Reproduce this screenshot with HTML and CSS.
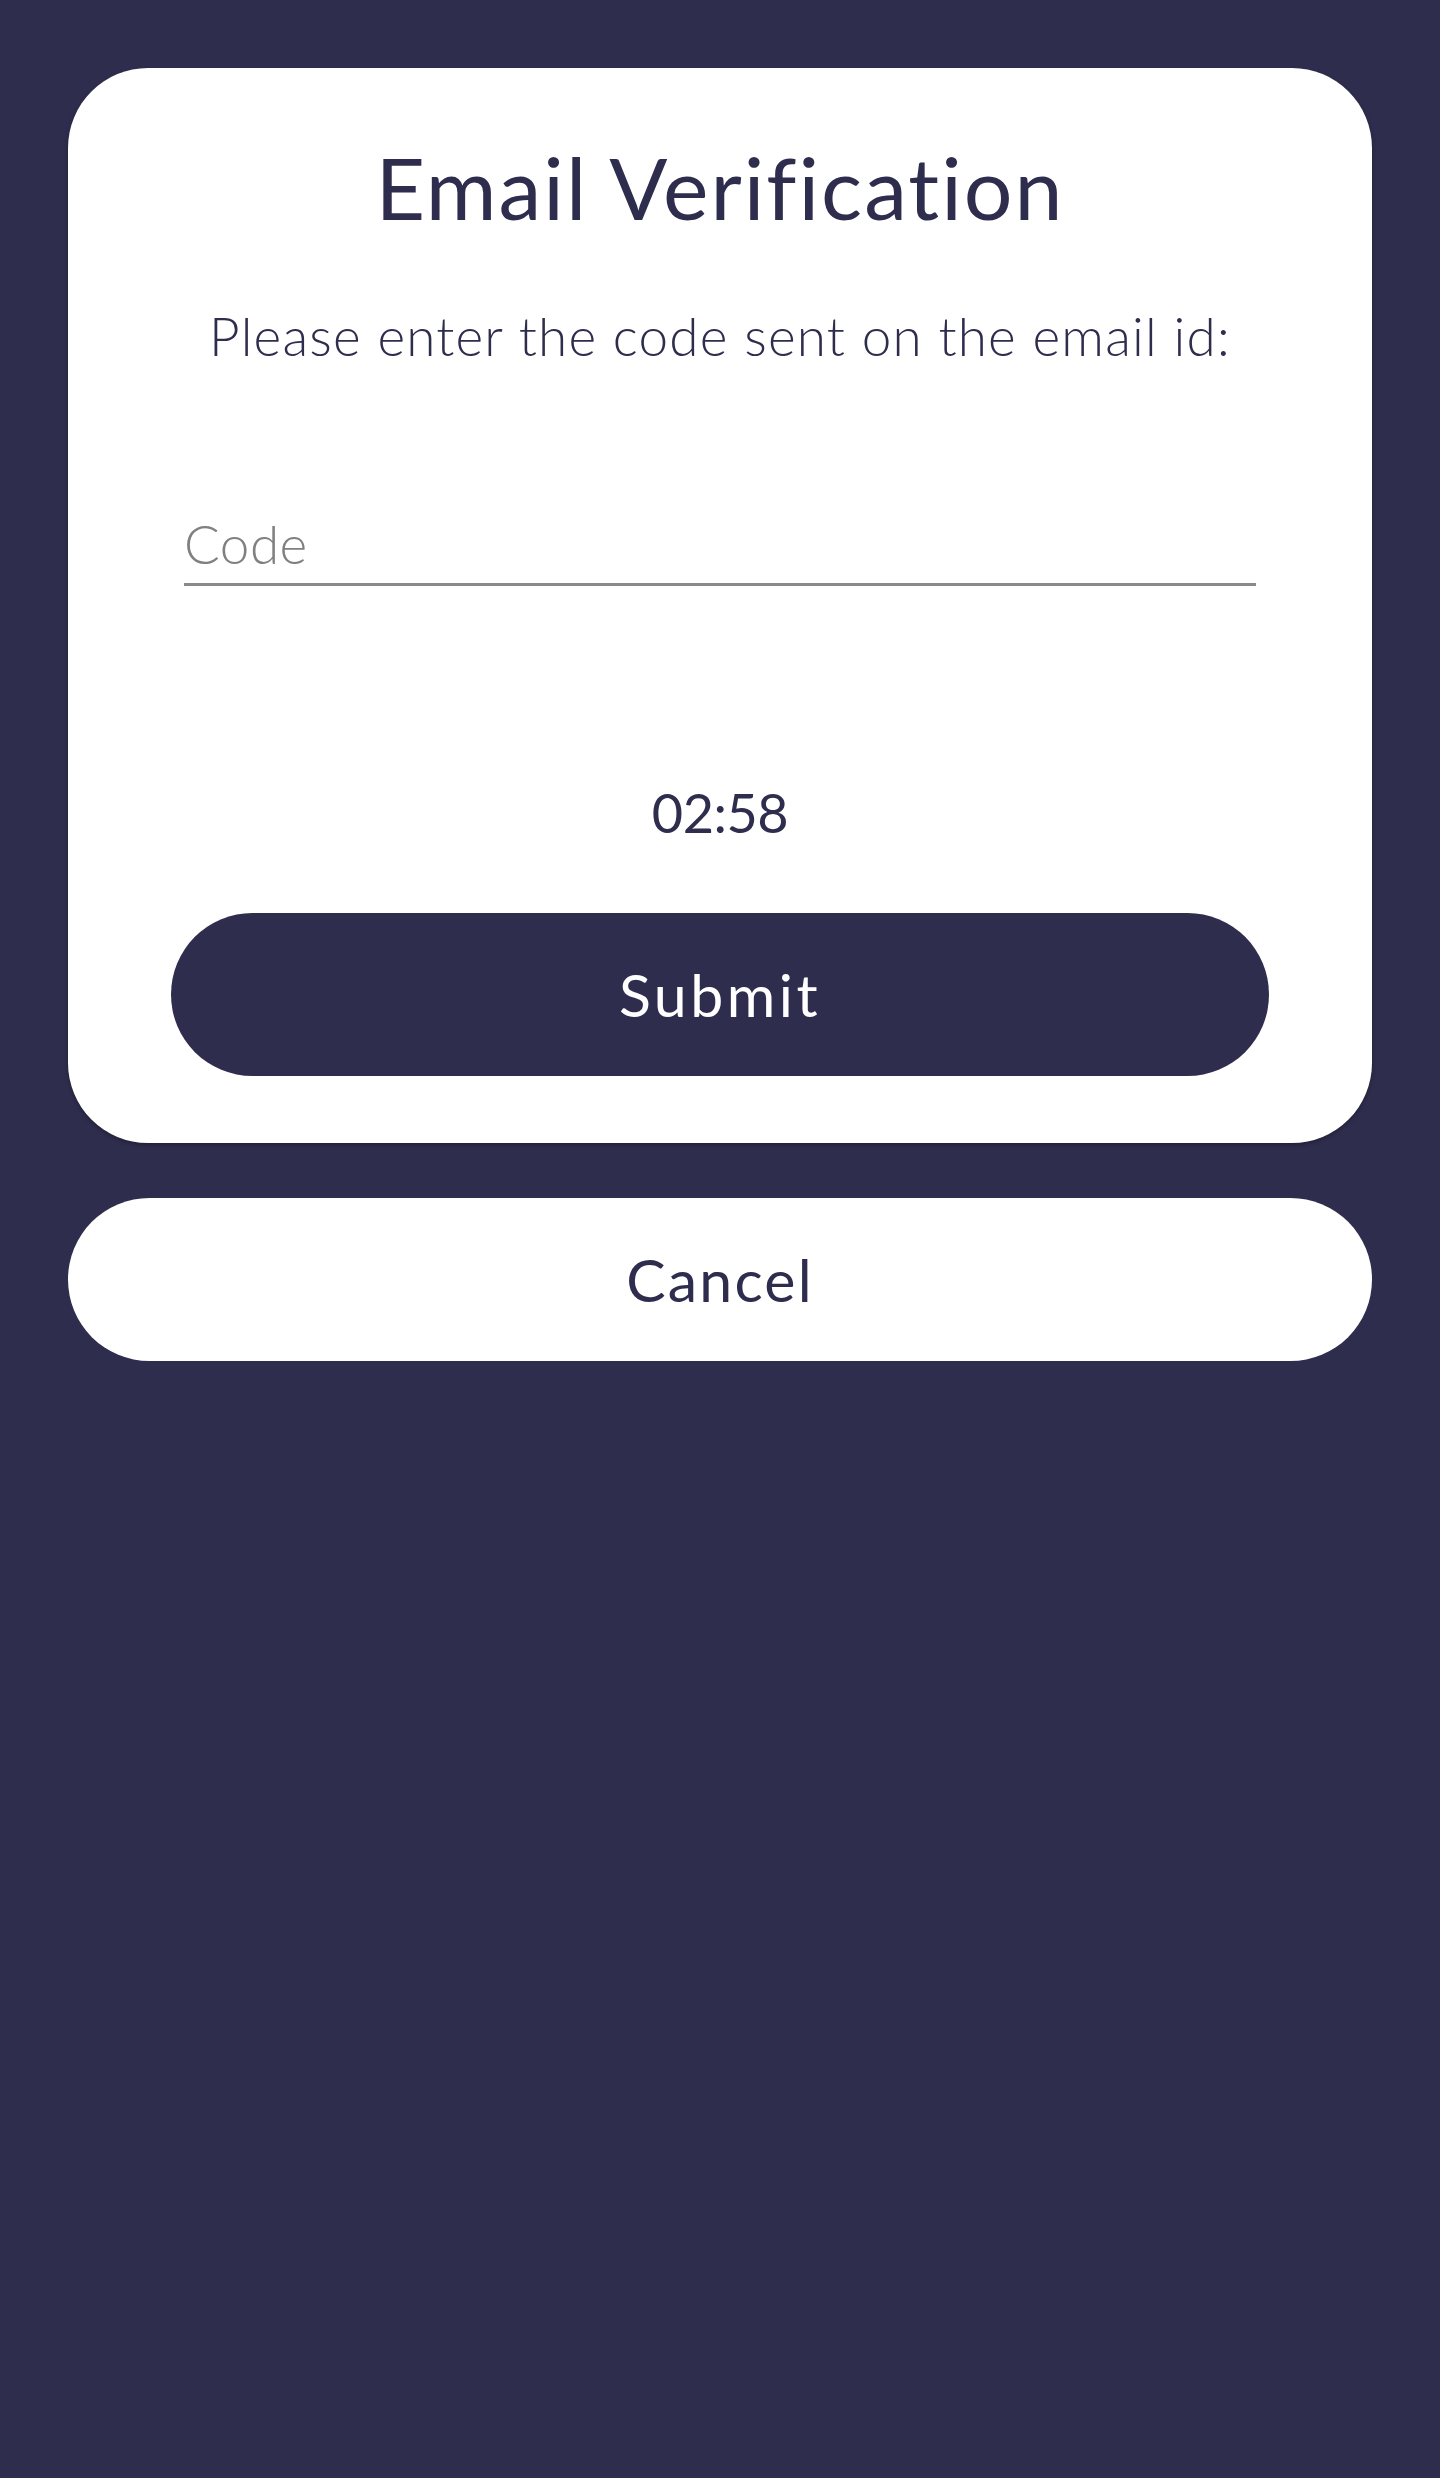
FILE: index.html
```html
<!DOCTYPE html>
<html lang="en">
<head>
<meta charset="utf-8">
<title>Email Verification</title>
<link rel="stylesheet" href="styles.css">
</head>
<body>
<main class="page">
  <section class="card">
    <h1 class="title">Email Verification</h1>
    <p class="subtitle">Please enter the code sent on the email id:</p>
    <div class="field">
      <input class="code-input" type="text" placeholder="Code">
    </div>
    <div class="timer">02:58</div>
    <button class="btn btn-submit" type="button">Submit</button>
  </section>
  <button class="btn btn-cancel" type="button">Cancel</button>
</main>
</body>
</html>
```

FILE: styles.css
```css
* { box-sizing: border-box; }
html, body {
  margin: 0;
  padding: 0;
  background: #2f2d4d;
}
body {
  font-family: "Lato", "Open Sans", sans-serif;
  font-variant-ligatures: none;
  color: #2f2d4d;
  min-height: 2478px;
}
.page {
  padding: 68px 68px 0 68px;
  display: flex;
  flex-direction: column;
}
.card {
  background: #ffffff;
  border-radius: 80px;
  padding: 69px 103px 67px 103px;
  display: flex;
  flex-direction: column;
  box-shadow: 0 2px 4px rgba(0, 0, 0, 0.3);
}
.title {
  margin: 0;
  font-size: 86px;
  font-weight: 400;
  line-height: 100px;
  letter-spacing: 2px;
  text-align: center;
  color: #2f2d4d;
}
.subtitle {
  margin: 67px 0 0 0;
  font-size: 53px;
  font-weight: 300;
  line-height: 64px;
  letter-spacing: 1.2px;
  text-align: center;
}
.field {
  margin: 144px 13px 0 13px;
  border-bottom: 3px solid #8a8a8a;
  padding-bottom: 7px;
}
.code-input {
  display: block;
  width: 100%;
  border: none;
  outline: none;
  padding: 0;
  margin: 0;
  font-family: inherit;
  font-size: 53px;
  font-weight: 300;
  line-height: 64px;
  height: 64px;
  letter-spacing: 0.5px;
  color: #2f2d4d;
  background: transparent;
}
.code-input::placeholder {
  color: #808080;
}
.timer {
  margin-top: 195px;
  font-size: 54px;
  font-weight: 400;
  line-height: 64px;
  letter-spacing: -0.5px;
  text-align: center;
}
.btn {
  display: flex;
  align-items: center;
  justify-content: center;
  height: 163px;
  border: none;
  border-radius: 82px;
  font-family: inherit;
  font-size: 59px;
  font-weight: 400;
  cursor: pointer;
  width: 100%;
}
.btn-submit {
  margin-top: 68px;
  background: #2f2d4d;
  color: #ffffff;
  letter-spacing: 3.5px;
}
.btn-cancel {
  margin-top: 55px;
  background: #ffffff;
  color: #2f2d4d;
  letter-spacing: 2.2px;
}
```
